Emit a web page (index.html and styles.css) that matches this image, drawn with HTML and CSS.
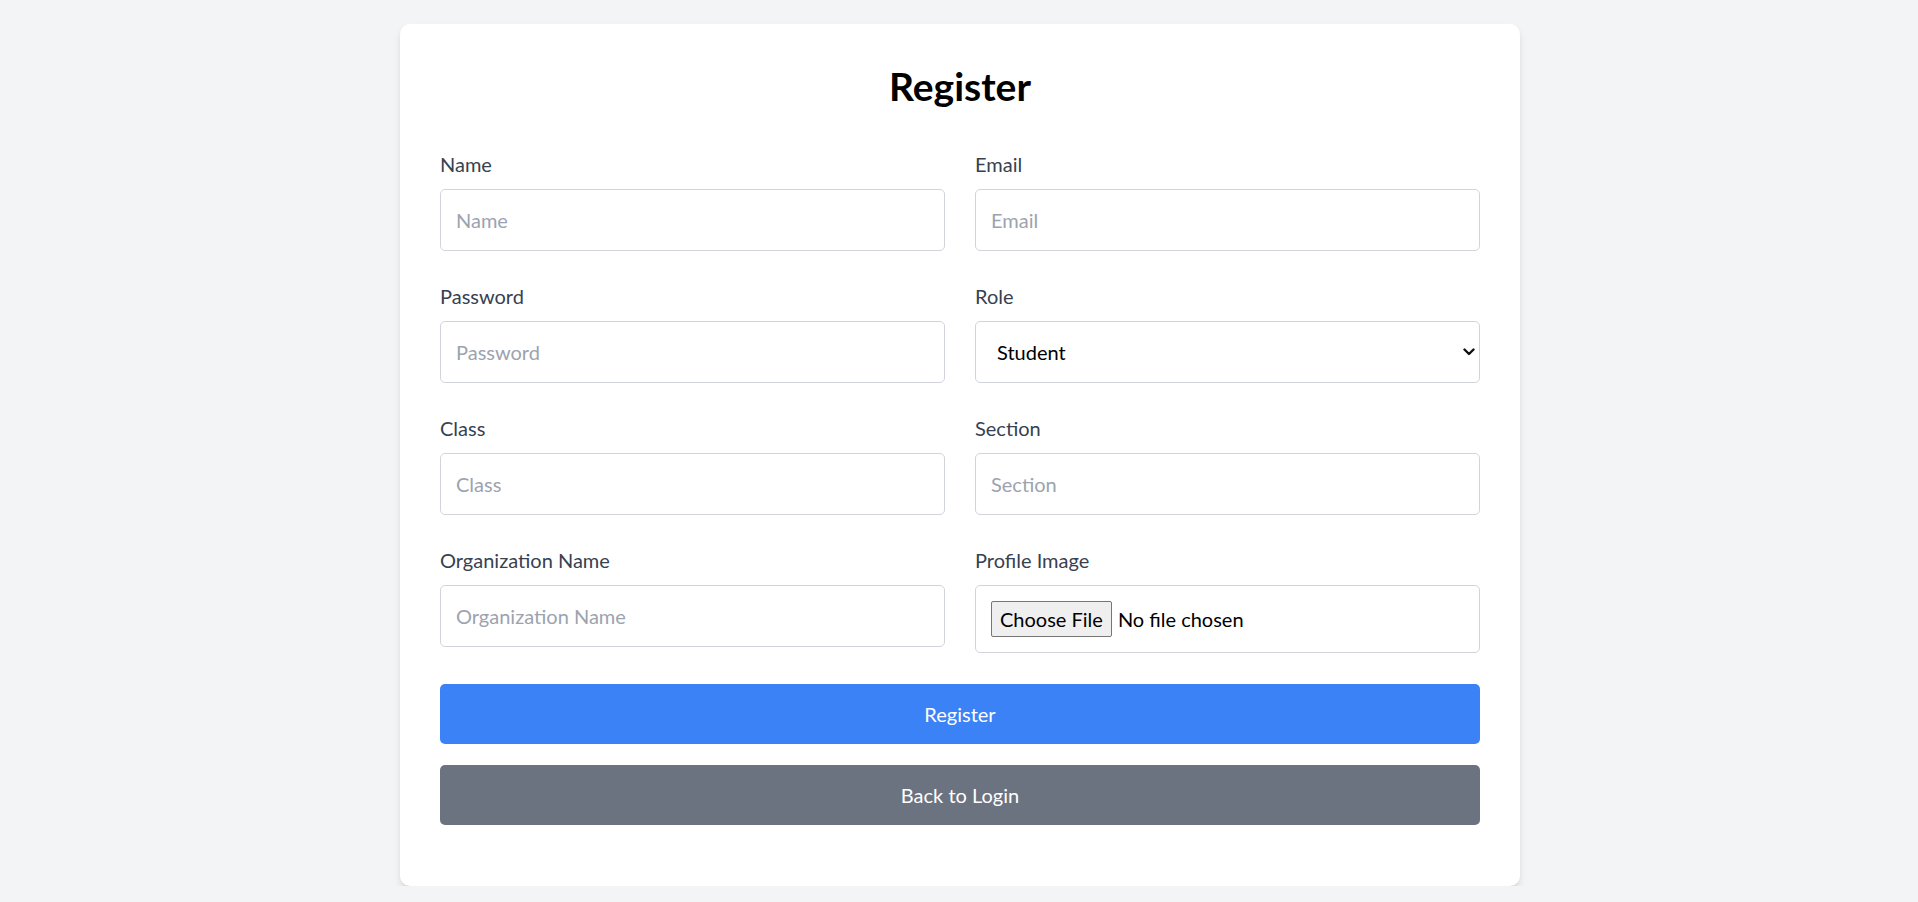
FILE: index.html
```html
<!DOCTYPE html>
<html lang="en">
<head>
<meta charset="utf-8">
<title>Register</title>
<link rel="stylesheet" href="styles.css">
</head>
<body>
<main class="page">
  <div class="card">
    <h1 class="title">Register</h1>
    <form class="form">
      <div class="grid">
        <div class="field">
          <label class="label" for="name">Name</label>
          <input class="input" id="name" type="text" placeholder="Name">
        </div>
        <div class="field">
          <label class="label" for="email">Email</label>
          <input class="input" id="email" type="email" placeholder="Email">
        </div>
        <div class="field">
          <label class="label" for="password">Password</label>
          <input class="input" id="password" type="password" placeholder="Password">
        </div>
        <div class="field">
          <label class="label" for="role">Role</label>
          <div class="select-wrap">
            <select class="input select" id="role">
              <option>Student</option>
              <option>Teacher</option>
              <option>Admin</option>
            </select>
            <svg class="chevron" width="12" height="8" viewBox="0 0 12 8" aria-hidden="true"><path d="M1.5 1.5 L6 6 L10.5 1.5" fill="none" stroke="#111" stroke-width="2.4" stroke-linecap="round" stroke-linejoin="round"/></svg>
          </div>
        </div>
        <div class="field">
          <label class="label" for="class">Class</label>
          <input class="input" id="class" type="text" placeholder="Class">
        </div>
        <div class="field">
          <label class="label" for="section">Section</label>
          <input class="input" id="section" type="text" placeholder="Section">
        </div>
        <div class="field">
          <label class="label" for="org">Organization Name</label>
          <input class="input" id="org" type="text" placeholder="Organization Name">
        </div>
        <div class="field">
          <label class="label" for="image">Profile Image</label>
          <input class="input file" id="image" type="file">
        </div>
      </div>
      <button class="btn btn-primary" type="button">Register</button>
      <button class="btn btn-secondary" type="button">Back to Login</button>
    </form>
  </div>
</main>
</body>
</html>
```

FILE: styles.css
```css
* { box-sizing: border-box; }

html, body {
  margin: 0;
  padding: 0;
  background: #f3f4f6;
  font-family: Lato, "Open Sans", "Liberation Sans", sans-serif;
}

.page {
  padding: 24px 0 0 2px;
  display: flex;
  justify-content: center;
}

.card {
  width: 1120px;
  background: #ffffff;
  border-radius: 10px;
  box-shadow: 0 5px 8px -1px rgba(0, 0, 0, 0.1), 0 2px 5px -2px rgba(0, 0, 0, 0.1);
  padding: 40px 40px 61px;
}

.title {
  margin: 0 0 40px;
  text-align: center;
  font-size: 39px;
  line-height: 45px;
  font-weight: 700;
  color: #000;
}

.form { display: flex; flex-direction: column; }

.grid {
  display: grid;
  grid-template-columns: 1fr 1fr;
  column-gap: 30px;
  row-gap: 30px;
}

.field { display: flex; flex-direction: column; }

.label {
  font-size: 20px;
  line-height: 30px;
  color: #374151;
  margin-bottom: 10px;
}

.input {
  width: 100%;
  height: 62px;
  padding: 15px;
  border: 1px solid #d1d5db;
  border-radius: 5px;
  font-family: inherit;
  font-size: 20px;
  line-height: 30px;
  color: #111827;
  background: #fff;
  outline: none;
}

.input::placeholder { color: #9ca3af; }

.select-wrap { position: relative; }

.select {
  appearance: none;
  -webkit-appearance: none;
  padding-left: 21px;
  color: #000;
}

.chevron {
  position: absolute;
  right: 5px;
  top: 27px;
  pointer-events: none;
}

.file {
  height: 68px;
  padding: 15px;
  line-height: 36px;
  color: #000;
}

.file::file-selector-button {
  font-family: inherit;
  font-size: 20px;
  line-height: 30px;
  height: 36px;
  padding: 2px 8px;
  margin-right: 6px;
  background: #efefef;
  border: 1px solid #767676;
  border-radius: 2px;
  color: #000;
}

.btn {
  width: 100%;
  height: 60px;
  border: none;
  border-radius: 5px;
  font-family: inherit;
  font-size: 20px;
  line-height: 30px;
  color: #fff;
  cursor: pointer;
}

.btn-primary {
  background: #3b82f6;
  margin-top: 31px;
}

.btn-secondary {
  background: #6b7280;
  margin-top: 21px;
}
```
